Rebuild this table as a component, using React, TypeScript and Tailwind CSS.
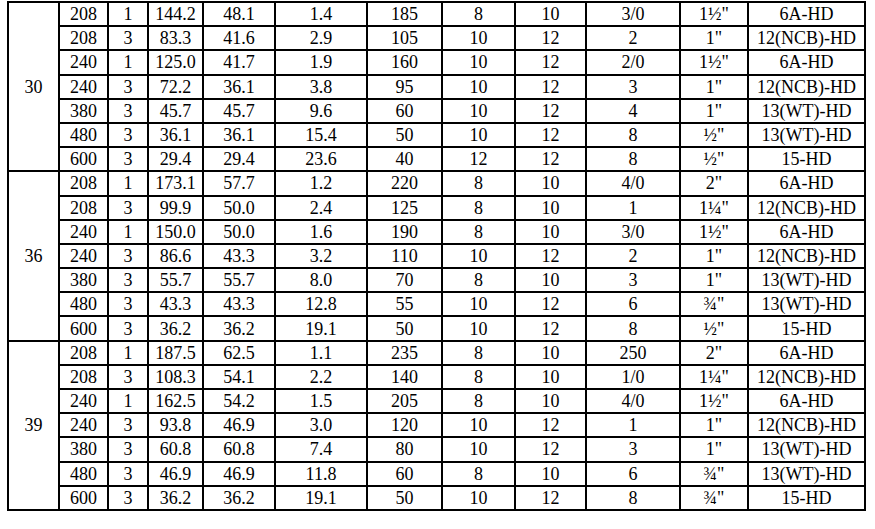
import React from "react";

type Row = string[];

const groups: { hp: string; rows: Row[] }[] = [
  {
    hp: "30",
    rows: [
      ["208", "1", "144.2", "48.1", "1.4", "185", "8", "10", "3/0", "1½\"", "6A-HD"],
      ["208", "3", "83.3", "41.6", "2.9", "105", "10", "12", "2", "1\"", "12(NCB)-HD"],
      ["240", "1", "125.0", "41.7", "1.9", "160", "10", "12", "2/0", "1½\"", "6A-HD"],
      ["240", "3", "72.2", "36.1", "3.8", "95", "10", "12", "3", "1\"", "12(NCB)-HD"],
      ["380", "3", "45.7", "45.7", "9.6", "60", "10", "12", "4", "1\"", "13(WT)-HD"],
      ["480", "3", "36.1", "36.1", "15.4", "50", "10", "12", "8", "½\"", "13(WT)-HD"],
      ["600", "3", "29.4", "29.4", "23.6", "40", "12", "12", "8", "½\"", "15-HD"],
    ],
  },
  {
    hp: "36",
    rows: [
      ["208", "1", "173.1", "57.7", "1.2", "220", "8", "10", "4/0", "2\"", "6A-HD"],
      ["208", "3", "99.9", "50.0", "2.4", "125", "8", "10", "1", "1¼\"", "12(NCB)-HD"],
      ["240", "1", "150.0", "50.0", "1.6", "190", "8", "10", "3/0", "1½\"", "6A-HD"],
      ["240", "3", "86.6", "43.3", "3.2", "110", "10", "12", "2", "1\"", "12(NCB)-HD"],
      ["380", "3", "55.7", "55.7", "8.0", "70", "8", "10", "3", "1\"", "13(WT)-HD"],
      ["480", "3", "43.3", "43.3", "12.8", "55", "10", "12", "6", "¾\"", "13(WT)-HD"],
      ["600", "3", "36.2", "36.2", "19.1", "50", "10", "12", "8", "½\"", "15-HD"],
    ],
  },
  {
    hp: "39",
    rows: [
      ["208", "1", "187.5", "62.5", "1.1", "235", "8", "10", "250", "2\"", "6A-HD"],
      ["208", "3", "108.3", "54.1", "2.2", "140", "8", "10", "1/0", "1¼\"", "12(NCB)-HD"],
      ["240", "1", "162.5", "54.2", "1.5", "205", "8", "10", "4/0", "1½\"", "6A-HD"],
      ["240", "3", "93.8", "46.9", "3.0", "120", "10", "12", "1", "1\"", "12(NCB)-HD"],
      ["380", "3", "60.8", "60.8", "7.4", "80", "10", "12", "3", "1\"", "13(WT)-HD"],
      ["480", "3", "46.9", "46.9", "11.8", "60", "8", "10", "6", "¾\"", "13(WT)-HD"],
      ["600", "3", "36.2", "36.2", "19.1", "50", "10", "12", "8", "¾\"", "15-HD"],
    ],
  },
];

export default function App() {
  return (
    <div className="w-[875px] h-[529px] bg-white overflow-hidden pt-[1px] pl-[7px]">
      <div
        className="grid w-[859px] bg-black p-[2px] gap-[2px] grid-cols-[49px_47px_38px_53px_70px_90px_73px_71px_69px_92px_66px_115px] grid-rows-[repeat(21,22.19px)] text-black text-[18px] leading-none"
        style={{ fontFamily: '"Liberation Serif", "Times New Roman", serif' }}
      >
        {groups.map((g) => (
          <React.Fragment key={g.hp}>
            <div className="row-span-7 bg-white flex items-center justify-center">{g.hp}</div>
            {g.rows.map((r, ri) =>
              r.map((c, ci) => (
                <div
                  key={`${g.hp}-${ri}-${ci}`}
                  className="bg-white flex items-center justify-center whitespace-nowrap"
                >
                  {c}
                </div>
              ))
            )}
          </React.Fragment>
        ))}
      </div>
    </div>
  );
}
